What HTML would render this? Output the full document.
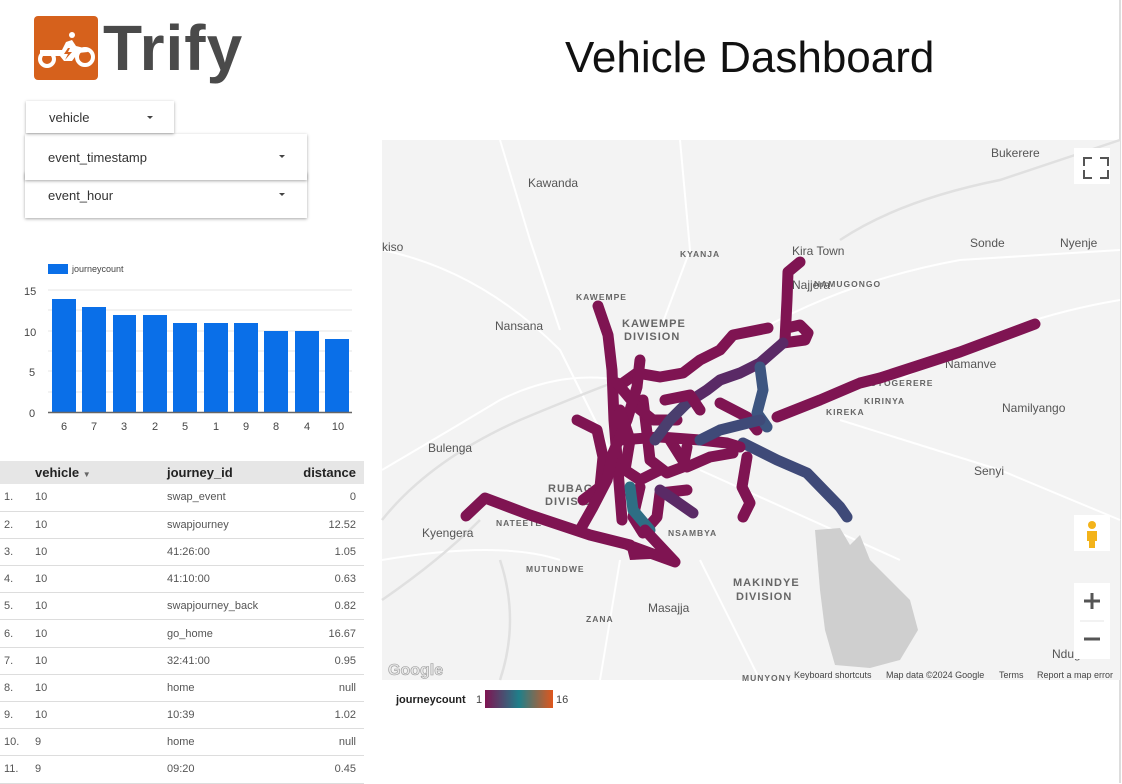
<!DOCTYPE html>
<html><head><meta charset="utf-8">
<style>
*{margin:0;padding:0;box-sizing:border-box}
body{width:1122px;height:783px;overflow:hidden;background:#fff;font-family:"Liberation Sans",sans-serif;position:relative;color:#222}
.abs{position:absolute}
.dd{position:absolute;background:#fff;box-shadow:0 1px 3px rgba(0,0,0,.35);font-size:13px;color:#333}
.dd span{position:absolute;left:23px}
.dd i{position:absolute;width:0;height:0;border-left:3px solid transparent;border-right:3px solid transparent;border-top:3px solid #444}
table{position:absolute;left:0;top:461px;width:364px;border-collapse:collapse;font-size:11px;color:#555}
th{background:#e6e6e6;height:23px;font-size:13px;color:#222;font-weight:bold;text-align:left}
td{height:27.2px;border-bottom:1px solid #ddd}
.r{text-align:right;padding-right:8px}
</style></head><body>
<div class="abs" style="left:1119px;top:0;width:2px;height:783px;background:#ddd"></div>
<!-- logo -->
<div class="abs" style="left:34px;top:16px;width:64px;height:64px;background:#d6611c;border-radius:4px">
<svg width="64" height="64" viewBox="0 0 64 64"><g fill="none" stroke="#fff" stroke-width="4"><circle cx="13" cy="43" r="7"/><circle cx="51" cy="41" r="8"/></g><path d="M6 34h22l4-8 6-2 4 6 8 2 4 4-10 1-6 8h-8l-4-5-20 0z" fill="#fff"/><path d="M34 32l-4 6h4l-3 6 7-8h-4l2-4z" fill="#d6611c"/><circle cx="38" cy="19" r="3" fill="#fff"/></svg></div>
<div class="abs" style="left:103px;top:12px;font-size:64px;font-weight:bold;color:#4a4a4a;letter-spacing:1px;line-height:72px">Trify</div>
<div class="abs" style="left:565px;top:33px;font-size:44px;color:#111">Vehicle Dashboard</div>
<!-- dropdowns -->
<div class="dd" style="left:25px;top:172px;width:282px;height:46px"><span style="top:16px">event_hour</span><i style="left:254px;top:21px"></i></div>
<div class="dd" style="left:25px;top:134px;width:282px;height:46px"><span style="top:16px">event_timestamp</span><i style="left:254px;top:21px"></i></div>
<div class="dd" style="left:26px;top:101px;width:148px;height:32px"><span style="top:9px">vehicle</span><i style="left:121px;top:15px"></i></div>
<!-- chart -->
<svg class="abs" style="left:0;top:250px" width="370" height="190">
<rect x="48" y="14" width="20" height="10" fill="#0a6fe8"/><text x="72" y="22" font-size="9" fill="#444">journeycount</text>
<g stroke="#e6e6e6" stroke-width="1"><line x1="48" x2="352" y1="40" y2="40"/><line x1="48" x2="352" y1="60" y2="60"/><line x1="48" x2="352" y1="81" y2="81"/><line x1="48" x2="352" y1="101" y2="101"/><line x1="48" x2="352" y1="121" y2="121"/><line x1="48" x2="352" y1="142" y2="142"/></g>
<g fill="#0a6fe8"><rect x="52" y="49" width="24" height="113"/><rect x="82" y="57" width="24" height="105"/><rect x="113" y="65" width="23" height="97"/><rect x="143" y="65" width="24" height="97"/><rect x="173" y="73" width="24" height="89"/><rect x="204" y="73" width="24" height="89"/><rect x="234" y="73" width="24" height="89"/><rect x="264" y="81" width="24" height="81"/><rect x="295" y="81" width="24" height="81"/><rect x="325" y="89" width="24" height="73"/></g>
<line x1="48" x2="352" y1="162.5" y2="162.5" stroke="#666" stroke-width="1.5"/>
<g font-size="11" fill="#444"><text x="24" y="45">15</text><text x="24" y="86">10</text><text x="29" y="126">5</text><text x="29" y="167">0</text>
<g text-anchor="middle"><text x="64" y="180">6</text><text x="94" y="180">7</text><text x="124" y="180">3</text><text x="155" y="180">2</text><text x="185" y="180">5</text><text x="216" y="180">1</text><text x="246" y="180">9</text><text x="276" y="180">8</text><text x="307" y="180">4</text><text x="338" y="180">10</text></g></g>
</svg>
<!-- table -->
<table>
<tr><th style="width:35px"></th><th style="width:132px">vehicle <span style="font-size:8px;color:#666">▼</span></th><th>journey_id</th><th class="r">distance</th></tr>
<tr><td style="padding-left:4px">1.</td><td>10</td><td>swap_event</td><td class="r">0</td></tr>
<tr><td style="padding-left:4px">2.</td><td>10</td><td>swapjourney</td><td class="r">12.52</td></tr>
<tr><td style="padding-left:4px">3.</td><td>10</td><td>41:26:00</td><td class="r">1.05</td></tr>
<tr><td style="padding-left:4px">4.</td><td>10</td><td>41:10:00</td><td class="r">0.63</td></tr>
<tr><td style="padding-left:4px">5.</td><td>10</td><td>swapjourney_back</td><td class="r">0.82</td></tr>
<tr><td style="padding-left:4px">6.</td><td>10</td><td>go_home</td><td class="r">16.67</td></tr>
<tr><td style="padding-left:4px">7.</td><td>10</td><td>32:41:00</td><td class="r">0.95</td></tr>
<tr><td style="padding-left:4px">8.</td><td>10</td><td>home</td><td class="r">null</td></tr>
<tr><td style="padding-left:4px">9.</td><td>10</td><td>10:39</td><td class="r">1.02</td></tr>
<tr><td style="padding-left:4px">10.</td><td>9</td><td>home</td><td class="r">null</td></tr>
<tr><td style="padding-left:4px">11.</td><td>9</td><td>09:20</td><td class="r">0.45</td></tr>
</table>
<!-- map -->
<svg class="abs" style="left:0;top:0" width="1122" height="783">
<rect x="382" y="140" width="738" height="540" fill="#f3f3f3"/>
<g fill="none" stroke="#fff" stroke-width="2">
<path d="M382 250 Q480 270 560 350 L620 470"/><path d="M382 470 Q450 430 500 400 Q560 370 620 380"/><path d="M500 140 L530 240 L560 330"/><path d="M680 140 L690 250 L660 330"/><path d="M900 380 Q1000 320 1120 300"/><path d="M840 420 L1000 470 L1120 520"/><path d="M620 560 L600 680"/><path d="M700 560 L760 680"/><path d="M382 560 Q500 540 560 560"/><path d="M760 330 Q850 280 960 260 L1120 250"/><path d="M700 470 L900 560"/>
</g>
<g fill="none" stroke="#e0e0e0" stroke-width="2.5"><path d="M382 520 Q430 460 520 420 Q580 395 620 380"/><path d="M382 600 Q440 560 480 520"/><path d="M500 560 Q520 620 500 680"/><path d="M840 240 Q900 200 1000 180 L1120 140"/></g>
<path d="M815 530 L840 528 L850 545 L860 535 L870 560 L890 580 L910 600 L918 630 L900 660 L870 668 L835 665 L825 630 L820 590 Z" fill="#cfcfcf"/>
<g font-family="Liberation Sans,sans-serif" fill="#555" font-size="12">
<text x="991" y="157">Bukerere</text><text x="528" y="187">Kawanda</text><text x="382" y="251">kiso</text><text x="792" y="255">Kira Town</text><text x="970" y="247">Sonde</text><text x="1060" y="247">Nyenje</text><text x="792" y="289">Najjera</text><text x="495" y="330">Nansana</text><text x="1002" y="412">Namilyango</text><text x="428" y="452">Bulenga</text><text x="974" y="475">Senyi</text><text x="422" y="537">Kyengera</text><text x="648" y="612">Masajja</text><text x="1052" y="658">Ndugu</text><text x="945" y="368">Namanve</text>
<g font-size="8.5" font-weight="bold" fill="#666" letter-spacing="1"><text x="680" y="257">KYANJA</text><text x="814" y="287">NAMUGONGO</text><text x="576" y="300">KAWEMPE</text><text x="622" y="327" font-size="11">KAWEMPE</text><text x="624" y="340" font-size="11">DIVISION</text><text x="863" y="386">BUYOGERERE</text><text x="864" y="404">KIRINYA</text><text x="826" y="415">KIREKA</text><text x="548" y="492" font-size="11">RUBAGA</text><text x="545" y="505" font-size="11">DIVISION</text><text x="496" y="526">NATEETE</text><text x="668" y="536">NSAMBYA</text><text x="526" y="572">MUTUNDWE</text><text x="733" y="586" font-size="11">MAKINDYE</text><text x="736" y="600" font-size="11">DIVISION</text><text x="586" y="622">ZANA</text><text x="742" y="681">MUNYONY</text></g>
</g>
<g fill="none" stroke-linecap="round" stroke-linejoin="round" stroke-width="11" stroke="#7f1452">
<path d="M598 306 L608 335 L612 370 L614 420 L618 470 L622 520"/>
<path d="M800 262 L788 272 L787 300 L785 340 L783 343 L805 340 L808 333 L800 325 L787 328"/>
<path d="M783 343 L760 363 L740 373 L720 380 L707 390 L687 403" stroke="#5a2a66"/>
<path d="M768 328 L733 335 L720 350 L700 360 L683 373 L660 377 L637 373 L623 383"/>
<path d="M777 417 L820 400 L860 383 L880 378 L960 352 L1035 324"/>
<path d="M743 443 L777 460 L807 473 L840 507 L847 517" stroke="#3f4a78"/>
<path d="M720 403 L747 417 L757 430"/>
<path d="M747 457 L742 487 L750 503 L743 517"/>
<path d="M620 440 L660 437 L700 440 L727 443 L740 447"/>
<path d="M670 440 L687 467 L710 457 L733 453"/>
<path d="M643 400 L647 433 L650 460 L667 473 L683 467 L687 447"/>
<path d="M577 420 L597 430 L603 457 L600 487 L583 500"/>
<path d="M640 487 L633 517 L643 533 L657 517 L660 493 L687 490"/>
<path d="M617 383 L637 407 L653 420 L677 420"/>
<path d="M640 360 L637 387 L627 420 L613 453 L607 480 L593 507 L580 530"/>
<path d="M660 490 L693 513" stroke="#5a2a66"/>
<path d="M466 516 L485 498 L530 515 L590 535 L630 545"/>
<path d="M630 487 L633 510 L650 530" stroke="#2e6e84"/>
<path d="M760 367 L763 390 L757 413 L767 427" stroke="#3d5580"/>
<path d="M687 403 L670 420 L655 440" stroke="#4a3e6e"/>
<path d="M700 440 L720 430 L760 420" stroke="#3f4a78"/>
<path d="M628 545 L675 562 L645 530"/>
<path d="M620 410 L630 440 L625 470 L640 480 L660 470"/>
<path d="M665 400 L690 395 L700 410"/>
</g>
<path d="M625 540 L670 558 L630 560 Z" fill="#7f1452"/>
<rect x="1074" y="148" width="36" height="36" fill="#fff"/>
<path d="M1084 166v-8h8M1100 158h8v8M1108 170v8h-8M1092 178h-8v-8" fill="none" stroke="#555" stroke-width="2"/>
<rect x="1074" y="515" width="36" height="36" fill="#fff"/>
<circle cx="1092" cy="525" r="4" fill="#f3b31a"/><path d="M1087 531h10v10h-2v7h-6v-7h-2z" fill="#f3b31a"/>
<rect x="1074" y="583" width="36" height="76" fill="#fff"/>
<line x1="1080" y1="621" x2="1104" y2="621" stroke="#e6e6e6"/>
<path d="M1084 601h16M1092 593v16M1084 639h16" stroke="#555" stroke-width="3"/>
<text x="388" y="675" font-size="16" font-weight="bold" fill="#e8e8e8" stroke="#999" stroke-width=".6">Google</text>
<rect x="790" y="668" width="330" height="12" fill="#f3f3f3" opacity=".8"/>
<g font-size="9" fill="#444"><text x="794" y="678">Keyboard shortcuts</text><text x="886" y="678">Map data ©2024 Google</text><text x="999" y="678">Terms</text><text x="1037" y="678">Report a map error</text></g>
<defs><linearGradient id="g"><stop offset="0" stop-color="#7f1452"/><stop offset=".5" stop-color="#1f7f8a"/><stop offset="1" stop-color="#e0561c"/></linearGradient></defs>
<text x="396" y="703" font-size="11" font-weight="bold" fill="#222">journeycount</text>
<text x="476" y="703" font-size="11" fill="#444">1</text>
<rect x="485" y="690" width="68" height="18" fill="url(#g)"/>
<text x="556" y="703" font-size="11" fill="#444">16</text>
</svg>
</body></html>
